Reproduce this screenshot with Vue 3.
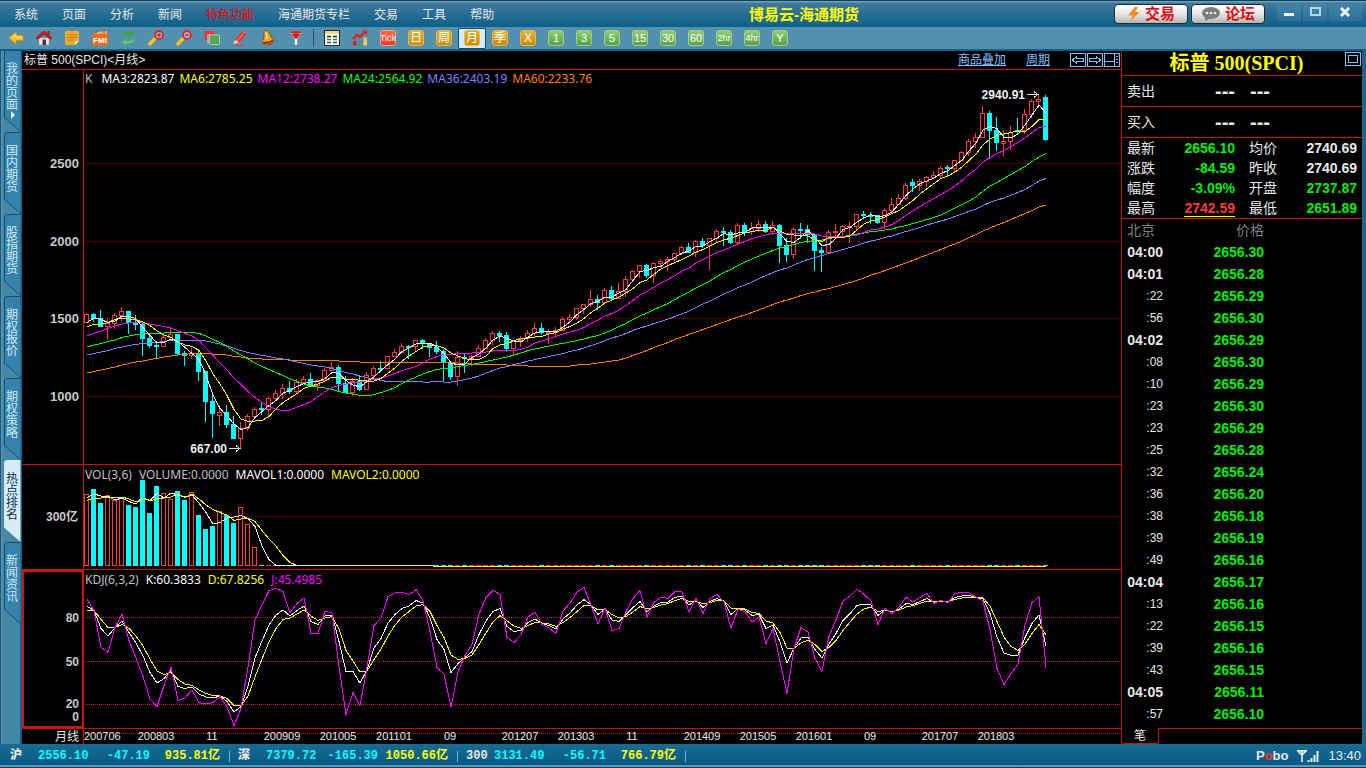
<script setup>
const menus = ['系统', '页面', '分析', '新闻', '特色功能', '海通期货专栏', '交易', '工具', '帮助']
const sideTabs = ['我的页面', '国内期货', '股指期货', '期权报价', '期权策略', '热点排名', '新闻资讯']
const periods = [
  { t: '日', c: 'gold' }, { t: '周', c: 'gold' }, { t: '月', c: 'gold', on: true }, { t: '季', c: 'gold' }, { t: 'X', c: 'gold' },
  { t: '1', c: 'green' }, { t: '3', c: 'green' }, { t: '5', c: 'green' }, { t: '15', c: 'green' }, { t: '30', c: 'green' },
  { t: '60', c: 'green' }, { t: '2hr', c: 'green small' }, { t: '4hr', c: 'green small' }, { t: 'Y', c: 'green' },
]

// Monthly closes before the first visible candle (2002-06 .. 2007-04)
const history = [
  989.82, 911.62, 916.07, 815.28, 885.76, 936.31, 879.82,
  855.7, 841.15, 848.18, 916.92, 963.59, 974.5, 990.31, 1008.01, 995.97, 1050.71, 1058.2, 1111.92,
  1131.13, 1144.94, 1126.21, 1107.3, 1120.68, 1140.84, 1101.72, 1104.24, 1114.58, 1130.2, 1173.82, 1211.92,
  1181.27, 1203.6, 1180.59, 1156.85, 1191.5, 1191.33, 1234.18, 1220.33, 1228.81, 1207.01, 1249.48, 1248.29,
  1280.08, 1280.66, 1294.87, 1310.61, 1270.09, 1270.2, 1276.66, 1303.82, 1335.85, 1377.94, 1400.63, 1418.3,
  1438.24, 1406.82, 1420.86, 1482.37,
]
const priorRange = [[1431.81, 1385.93], [1441.61, 1403.97], [1461.57, 1389.42], [1438.89, 1363.98], [1498.02, 1416.37]]

// [high, low, close, open?] from 2007-05
const months = [
  [1535.56, 1476.7, 1530.62], [1540.56, 1484.18, 1503.35], [1555.9, 1454.25, 1455.27], [1503.89, 1370.6, 1473.99],
  [1538.74, 1439.29, 1526.75], [1576.09, 1489.56, 1549.38], [1545.79, 1406.1, 1481.14], [1523.57, 1435.65, 1468.36],
  [1471.77, 1270.05, 1378.55], [1396.02, 1316.75, 1330.63], [1359.68, 1256.98, 1322.7], [1404.57, 1324.35, 1385.59],
  [1440.24, 1373.07, 1400.38], [1404.05, 1272, 1280], [1292.17, 1200.44, 1267.38], [1313.15, 1247.45, 1282.83],
  [1303.04, 1106.42, 1166.36], [1167.03, 839.8, 968.75], [1007.51, 741.02, 896.24], [918.85, 815.69, 903.25, 880],
  [943.85, 804.3, 825.88], [875.01, 734.52, 735.09], [832.98, 667, 797.87], [888.7, 783.32, 872.81],
  [930.17, 866.1, 919.14], [956.23, 888.86, 919.32, 923.26], [996.68, 869.32, 987.48], [1039.47, 978.51, 1020.62],
  [1080.15, 991.97, 1057.08], [1101.36, 1019.95, 1036.19], [1113.69, 1029.38, 1095.63], [1130.38, 1085.89, 1115.1],
  [1150.45, 1071.59, 1073.87], [1112.42, 1044.5, 1104.49], [1180.69, 1105.36, 1169.43], [1219.8, 1170.69, 1186.69],
  [1205.13, 1040.78, 1089.41], [1131.23, 1028.33, 1030.71], [1120.95, 1010.91, 1101.6], [1129.24, 1039.7, 1049.33],
  [1157.16, 1049.72, 1141.2], [1196.14, 1131.87, 1183.26], [1227.08, 1173, 1180.55], [1262.6, 1186.6, 1257.64],
  [1302.67, 1257.62, 1286.12], [1344.07, 1294.26, 1327.22], [1332.28, 1249.05, 1325.83], [1364.56, 1294.7, 1363.61],
  [1370.58, 1311.8, 1345.2], [1345.2, 1258.07, 1320.64], [1356.48, 1282.86, 1292.28], [1307.38, 1101.54, 1218.89],
  [1229.29, 1114.22, 1131.42], [1292.66, 1074.77, 1253.3], [1277.55, 1158.66, 1246.96], [1269.37, 1202.37, 1257.6],
  [1333.47, 1258.86, 1312.41], [1378.04, 1312.45, 1365.68], [1419.15, 1340.03, 1408.47], [1422.38, 1357.38, 1397.91],
  [1415.32, 1291.98, 1310.33], [1363.46, 1266.74, 1362.16], [1391.74, 1325.41, 1379.32], [1426.68, 1354.65, 1406.58],
  [1474.51, 1396.56, 1440.67], [1470.96, 1403.28, 1412.16], [1434.27, 1343.35, 1416.18], [1448, 1398.11, 1426.19],
  [1509.94, 1426.19, 1498.11], [1530.94, 1485.01, 1514.68], [1570.28, 1501.48, 1569.19], [1597.57, 1536.03, 1597.57],
  [1687.18, 1581.28, 1630.74], [1654.19, 1560.33, 1606.28], [1698.78, 1604.57, 1685.73], [1709.67, 1627.47, 1632.97],
  [1729.86, 1633.41, 1681.55], [1775.22, 1646.47, 1756.54], [1813.55, 1746.2, 1805.81], [1849.44, 1767.99, 1848.36],
  [1850.84, 1770.45, 1782.59], [1867.92, 1737.92, 1859.45], [1883.97, 1834.44, 1872.34], [1897.28, 1814.36, 1883.95],
  [1924.03, 1859.79, 1923.57], [1968.17, 1915.98, 1960.23], [1991.39, 1930.67, 1930.67], [2005.04, 1904.78, 2003.37],
  [2019.26, 1964.04, 1972.29], [2018.19, 1820.66, 2018.05], [2075.76, 2001.01, 2067.56], [2093.55, 1972.56, 2058.9],
  [2072.36, 1988.12, 1994.99], [2119.59, 1980.9, 2104.5], [2117.52, 2039.69, 2067.89], [2125.92, 2048.38, 2085.51],
  [2134.72, 2067.93, 2107.39], [2129.87, 2056.32, 2063.11], [2132.82, 2044.02, 2103.84], [2112.66, 1867.01, 1972.18],
  [2020.86, 1871.91, 1920.03], [2094.32, 1893.7, 2079.36], [2116.48, 2019.39, 2080.41, 2080.76], [2104.27, 1993.26, 2043.94],
  [2038.2, 1812.29, 1940.24], [1962.96, 1810.1, 1932.23], [2072.21, 1937.09, 2059.74], [2111.05, 2033.8, 2065.3],
  [2103.48, 2025.91, 2096.95], [2120.55, 1991.68, 2098.86], [2177.09, 2074.02, 2173.6], [2193.81, 2147.58, 2170.95],
  [2187.87, 2119.12, 2168.27], [2169.6, 2114.72, 2126.15], [2214.1, 2083.79, 2198.81], [2277.53, 2187.44, 2238.83],
  [2300.99, 2245.13, 2278.87], [2371.54, 2271.65, 2363.64], [2400.98, 2322.25, 2362.72, 2380.13], [2398.16, 2328.95, 2384.2],
  [2418.71, 2352.72, 2411.8], [2453.82, 2405.7, 2423.41], [2484.04, 2407.7, 2470.3], [2490.87, 2417.35, 2471.65, 2477.1],
  [2519.44, 2446.55, 2519.36], [2582.98, 2520.4, 2575.26], [2657.74, 2557.45, 2647.58], [2694.97, 2605.52, 2673.61],
  [2872.87, 2682.36, 2823.81], [2835.96, 2532.69, 2713.83], [2801.9, 2585.89, 2640.87], [2717.49, 2553.8, 2648.05, 2633.45],
  [2742.24, 2594.62, 2705.27], [2791.47, 2691.99, 2718.37, 2718.7], [2848.03, 2698.95, 2816.29], [2916.5, 2796.34, 2901.52],
  [2940.91, 2864.12, 2913.98], [2939.86, 2651.89, 2656.1, 2926.29],
]

const STEP = 7
const FIRST = 64
const barX = (i) => FIRST + i * STEP
const priceY = (v) => 93.5 + (2500 - v) * 0.15533
const kdjY = (v) => 47.5 + (80 - v) * 1.453
const path = (values, y) => values.map((v, i) => `${barX(i) + 1},${Math.round(y(v, i) * 2) / 2}`).join(' ')

const closes = [...history, ...months.map((m) => m[2])]
const average = (list, n, count) => {
  const start = list.length - count
  return Array.from({ length: count }, (_, i) => {
    const end = start + i + 1
    const part = list.slice(Math.max(0, end - n), end)
    return part.reduce((a, b) => a + b, 0) / part.length
  })
}

const candles = months.map((m, i) => {
  const open = m[3] ?? closes[history.length + i - 1]
  const up = m[2] >= open
  const top = Math.round(priceY(Math.max(open, m[2])))
  const bottom = Math.round(priceY(Math.min(open, m[2])))
  return { x: barX(i), up, top, h: Math.max(bottom - top, 1), hi: Math.round(priceY(m[0])), lo: Math.round(priceY(m[1])) + 1 }
})
const maLines = [
  { n: 60, c: '#ff8000' }, { n: 36, c: '#8080ff' }, { n: 24, c: '#00ff00' },
  { n: 12, c: '#ff00ff' }, { n: 6, c: '#ffff00' }, { n: 3, c: '#f0f0f0' },
].map((l) => ({ ...l, pts: path(average(closes, l.n, months.length), priceY) }))

const maLegend = [
  ['MA3:2823.87', '#ffffff'], ['MA6:2785.25', '#ffff00'], ['MA12:2738.27', '#ff00ff'],
  ['MA24:2564.92', '#00ff00'], ['MA36:2403.19', '#8080ff'], ['MA60:2233.76', '#ff8000'],
]

// Volume, in bar pixels above the baseline
const rawVol = [71, 76, 62, 70, 65, 67, 60, 58, 85, 52, 79, 72, 66, 74, 65, 73, 50, 36, 39, 54, 50, 42, 58, 41, 18]
const volUp = [1, 0, 0, 1, 1, 1, 0, 0, 0, 0, 0, 1, 1, 0, 0, 1, 0, 0, 0, 1, 0, 0, 1, 1, 1]
const volume = months.map((_, i) => rawVol[i] ?? 0)
const VOL_BASE = 101
const volBars = volume.map((v, i) => ({ x: barX(i), h: v, up: i < volUp.length ? !!volUp[i] : candles[i].up }))
const volY = (v, i) => (i < 50 ? VOL_BASE - 0.5 : VOL_BASE + 0.5) - v
const volHistory = [60, 62, 64, 66, 67, ...volume]
const mavol1 = path(average(volHistory, 3, months.length), volY)
const mavol2 = path(average(volHistory, 6, months.length), volY)

// KDJ(6,3,2)
const ranges = [...priorRange, ...months.map((m) => [m[0], m[1]])]
const kLine = []
const dLine = []
months.forEach((m, i) => {
  if (i === 0) {
    kLine.push(87.6)
    dLine.push(85)
    return
  }
  const win = ranges.slice(i, i + 6)
  const hi = Math.max(...win.map((r) => r[0]))
  const lo = Math.min(...win.map((r) => r[1]))
  const rsv = ((m[2] - lo) / (hi - lo)) * 100
  const k = (kLine[i - 1] * 2 + rsv) / 3
  kLine.push(k)
  dLine.push((dLine[i - 1] + k) / 2)
})
const jLine = kLine.map((k, i) => 3 * k - 2 * dLine[i])
const kdjLines = [
  { pts: path(kLine, kdjY), c: '#f0f0f0' },
  { pts: path(dLine, kdjY), c: '#ffff00' },
  { pts: path(jLine, kdjY), c: '#ff00ff' },
]

const dates = [
  [10, '200803'], [18, '11'], [28, '200909'], [36, '201005'], [44, '201101'], [52, '09'], [62, '201207'], [70, '201303'],
  [78, '11'], [88, '201409'], [96, '201505'], [104, '201601'], [112, '09'], [122, '201707'], [130, '201803'],
]

const quotes = [
  ['最新', '2656.10', 'dn', '均价', '2740.69', 'eq'],
  ['涨跌', '-84.59', 'dn', '昨收', '2740.69', 'eq'],
  ['幅度', '-3.09%', 'dn', '开盘', '2737.87', 'dn'],
  ['最高', '2742.59', 'up', '最低', '2651.89', 'dn'],
]
const ticks = [
  ['04:00', '2656.30'], ['04:01', '2656.28'], [':22', '2656.29'], [':56', '2656.30'], ['04:02', '2656.29'], [':08', '2656.30'],
  [':10', '2656.29'], [':23', '2656.30'], [':23', '2656.29'], [':25', '2656.28'], [':32', '2656.24'], [':36', '2656.20'],
  [':38', '2656.18'], [':39', '2656.19'], [':49', '2656.16'], ['04:04', '2656.17'], [':13', '2656.16'], [':22', '2656.15'],
  [':39', '2656.16'], [':43', '2656.15'], ['04:05', '2656.11'], [':57', '2656.10'],
]
const indices = [
  ['沪', '2556.10', '-47.19', '935.81亿'],
  ['深', '7379.72', '-165.39', '1050.66亿'],
  ['300', '3131.49', '-56.71', '766.79亿'],
]
</script>

<template>
  <div class="app">
    <header class="menubar">
      <nav class="menus">
        <button v-for="m in menus" :key="m" type="button" :class="{ hot: m === '特色功能' }">{{ m }}</button>
      </nav>
      <h1>博易云-海通期货</h1>
      <div class="topright">
        <button type="button" class="pill">
          <svg width="14" height="16" viewBox="0 0 14 16"><path d="M8 1 1 9.500h4.600L3.600 15 12.600 6H8.200L11 1z" fill="#f58a1e" /></svg>
          交易
        </button>
        <button type="button" class="pill">
          <svg width="20" height="16" viewBox="0 0 20 16"><ellipse cx="10" cy="7" rx="9" ry="6" fill="#7c7c7c" /><path d="M4 10v5l6-3z" fill="#7c7c7c" /><circle cx="6" cy="7" r="1.300" fill="#eee" /><circle cx="10" cy="7" r="1.300" fill="#eee" /><circle cx="14" cy="7" r="1.300" fill="#eee" /></svg>
          论坛
        </button>
        <div class="winbtns">
          <button type="button" aria-label="最小化"><svg width="12" height="12"><path d="M1 7.500h10" stroke="#e8f2f8" stroke-width="3" /></svg></button>
          <button type="button" aria-label="最大化"><svg width="12" height="12"><rect x="2" y="1" width="9" height="7" fill="none" stroke="#b4d8ea" stroke-width="2" /></svg></button>
          <button type="button" aria-label="关闭" class="close"><svg width="12" height="12"><path d="M2 1l8 8M10 1l-8 8" stroke="#e8f2f8" stroke-width="3" /></svg></button>
        </div>
      </div>
    </header>

    <div class="toolbar">
      <button type="button" aria-label="后退"><svg viewBox="0 0 16 16"><path d="M1 8 8 2v3.500h7v5H8V14z" fill="#ffc52e" stroke="#e08a00" /><path d="M4 7.500 8 4.500V7h6" fill="none" stroke="#fff0a0" /></svg></button>
      <button type="button" aria-label="首页"><svg viewBox="0 0 16 16"><path d="M3 8h10v7H3z" fill="#e9e9e9" stroke="#999" stroke-width=".5" /><path d="M0 8 8 1l8 7-2 1-6-5-6 5z" fill="#d8141c" stroke="#b81018" /><path d="M11.500 1h2v4l-2-2z" fill="#a01010" /><path d="M6.500 9.500h3.500V15H6.500z" fill="#503030" /></svg></button>
      <button type="button" aria-label="公告"><svg viewBox="0 0 16 16"><path d="M1 2q0-1 1-1h12q1 0 1 1v9l-4 4H2q-1 0-1-1z" fill="#f2a72e" /><path d="M15 11h-4v4z" fill="#ffe1a0" /><path d="M3.500 5h9M3.500 7.500h9M3.500 10h6" stroke="#c07a10" /></svg></button>
      <button type="button" aria-label="FMI"><svg viewBox="0 0 16 16"><path d="M0 4h16v11.500H0z" fill="#f26a1c" /><path d="M1 4l5-2 9-1v3z" fill="#f7b060" /><path d="M4 0v4M12 0v4" stroke="#a85010" /><text x="8" y="13" font-size="8" font-weight="bold" text-anchor="middle" fill="#fff">FMI</text></svg></button>
      <button type="button" aria-label="刷新"><svg viewBox="0 0 16 16"><path d="M2.500 6.500Q4 3.500 8 3.500h3" fill="none" stroke="#2fae2f" stroke-width="2.500" /><path d="M10 1l4.500 3L10 7z" fill="#2fae2f" /><path d="M13.500 9.500Q12 12.500 8 12.500H5" fill="none" stroke="#5ad048" stroke-width="2.500" /><path d="M6 9.500 1.500 12.500 6 15.500z" fill="#5ad048" /></svg></button>
      <button type="button" aria-label="放大"><svg viewBox="0 0 16 16"><path d="M2 14 6.500 9" stroke="#ffc21e" stroke-width="3.500" stroke-linecap="round" /><circle cx="11" cy="5" r="4" fill="#9cb4c4" stroke="#e0242c" stroke-width="1.800" /><path d="M9 5h4M11 3v4" stroke="#e0242c" stroke-width="1.500" /></svg></button>
      <button type="button" aria-label="缩小"><svg viewBox="0 0 16 16"><path d="M2 14 6.500 9" stroke="#ffc21e" stroke-width="3.500" stroke-linecap="round" /><circle cx="11" cy="5" r="4" fill="#9cb4c4" stroke="#e0242c" stroke-width="1.800" /><path d="M9 5h4" stroke="#e0242c" stroke-width="1.500" /></svg></button>
      <button type="button" aria-label="叠加"><svg viewBox="0 0 16 16"><rect x="0.500" y="1" width="10" height="9" rx="1" fill="#e8343c" /><rect x="3" y="4" width="4" height="9" fill="#b8cfdc" opacity=".6" /><rect x="5.500" y="5" width="10" height="9.500" rx="1" fill="#58a454" stroke="#a8d4a4" /></svg></button>
      <button type="button" aria-label="画线"><svg viewBox="0 0 16 16"><path d="M3 10 10.500 1l4 3L7 12.500z" fill="#ee2e24" /><path d="M5 11l7.500-9" stroke="#ff9a90" /><path d="M3 10l4 2.500L1.500 14z" fill="#ffd9a0" /><path d="M1 15.500h13" stroke="#e0403a" /></svg></button>
      <button type="button" aria-label="预警"><svg viewBox="0 0 16 16"><path d="M4 1q4-2 6 4 1 4 5 5-2 4-8 5-4 0-6-3 3-1 3-6z" fill="#f0a822" stroke="#96520c" /><path d="M5 3q2 0 2 6" fill="none" stroke="#fff0a0" stroke-width="1.500" /><path d="M3 12.500q6 1 10-2" fill="none" stroke="#7a2c08" stroke-width="2" /><circle cx="10" cy="13.500" r="1.800" fill="#d83020" /></svg></button>
      <button type="button" aria-label="过滤"><svg viewBox="0 0 16 16"><path d="M1.500 2h13L9.500 9v6h-3V9z" fill="#eef3f6" stroke="#8799a5" stroke-width=".7" /><path d="M3 4h10L8.500 9h-1z" fill="#e02028" /><ellipse cx="8" cy="2.500" rx="6" ry="1.500" fill="#c03030" /></svg></button>
      <span class="sep"></span>
      <button type="button" aria-label="报价"><svg viewBox="0 0 16 16"><rect x=".5" y=".5" width="15" height="15" fill="#fffef0" stroke="#223" /><path d="M1 2.500h14" stroke="#f0d890" stroke-width="3" /><path d="M3 6.500h4M9 6.500h4" stroke="#222" stroke-width="1.500" /><path d="M3 9.500h4M9 9.500h4" stroke="#2a8a2a" stroke-width="1.500" /><path d="M3 12.500h4M9 12.500h4" stroke="#2040a0" stroke-width="1.500" /></svg></button>
      <button type="button" aria-label="走势"><svg viewBox="0 0 16 16"><path d="M1 9l4-4 3 2 5-5" fill="none" stroke="#ee1c1c" stroke-width="2.200" /><path d="M10 .5h5v5z" fill="#ee1c1c" /><path d="M1 11h3.500v4.500H1z" fill="#d02020" /><path d="M6 12.500h3.500v3H6z" fill="#40a050" /><path d="M11.500 7.500h3.500v8h-3.500z" fill="#f6c860" /></svg></button>
      <button type="button"><span class="tile tick">Tick</span></button>
      <button v-for="p in periods" :key="p.t" type="button" :class="{ on: p.on }"><span class="tile" :class="p.c">{{ p.t }}</span></button>
    </div>

    <div class="body">
      <nav class="side">
        <button v-for="(t, i) in sideTabs" :key="t" type="button" :class="{ active: i === 5 }">
          <svg viewBox="0 0 17 82" preserveAspectRatio="none"><path d="M16.500 .5H3Q.5 .5 .5 3V67.500L16.500 81.500" /></svg>
          <span>{{ t }}</span><i v-if="i === 0"></i>
        </button>
      </nav>

      <main class="charts">
        <div class="titlerow">
          <h2>标普 500(SPCI)&lt;月线&gt;</h2>
          <a href="#overlay">商品叠加</a>
          <a href="#period">周期</a>
          <div class="navicons">
            <button type="button" aria-label="左移"><svg width="16" height="14"><rect x=".5" y=".5" width="15" height="13" /><path d="M2.500 7 6.500 3.500V5.500h7v3h-7v2z" /></svg></button>
            <button type="button" aria-label="右移"><svg width="16" height="14"><rect x=".5" y=".5" width="15" height="13" /><path d="M13.500 7 9.500 3.500V5.500h-7v3h7v2z" /></svg></button>
            <button type="button" aria-label="布局"><svg width="16" height="14"><rect x=".5" y=".5" width="15" height="13" /><path d="M.5 8.500h10M10.500 .5v13M12 3.500h2M12 6.500h2M12 9.500h2" /></svg></button>
          </div>
        </div>

        <section class="pane price">
          <svg class="plot">
            <g class="grid">
              <line v-for="v in [2500, 2000, 1500, 1000]" :key="v" x1="63" x2="100%" :y1="Math.floor(priceY(v)) + 0.5" :y2="Math.floor(priceY(v)) + 0.5" />
            </g>
            <line class="frame" x1="61.500" x2="61.500" y1="0" y2="100%" />
            <g class="ylab">
              <text v-for="v in [2500, 2000, 1500, 1000]" :key="v" x="57" :y="Math.floor(priceY(v)) + 5">{{ v }}</text>
            </g>
            <g v-for="c in candles" :key="c.x" :class="c.up ? 'cu' : 'cd'">
              <template v-if="c.up">
                <line :x1="c.x + 0.5" :x2="c.x + 0.5" :y1="c.hi" :y2="c.top" />
                <line :x1="c.x + 0.5" :x2="c.x + 0.5" :y1="c.top + c.h" :y2="c.lo" />
                <rect :x="c.x - 1.5" :y="c.top + 0.5" width="4" :height="c.h" />
              </template>
              <template v-else>
                <line :x1="c.x + 0.5" :x2="c.x + 0.5" :y1="c.hi" :y2="c.lo" />
                <rect :x="c.x - 2" :y="c.top" width="5" :height="c.h + 1" />
              </template>
            </g>
            <polyline v-for="l in maLines" :key="l.n" :points="l.pts" :stroke="l.c" />
            <g class="mark">
              <text x="205" y="383">667.00</text>
              <path d="M207 378.500h11M214 375.500l4 3-4 3" />
              <text x="1003" y="29">2940.91</text>
              <path d="M1005 24.500h11M1012 21.500l4 3-4 3" />
            </g>
          </svg>
          <div class="legend">
            <span class="name">K</span>
            <span v-for="l in maLegend" :key="l[0]" :style="{ color: l[1] }">{{ l[0] }}</span>
          </div>
        </section>

        <section class="pane vol">
          <svg class="plot">
            <g class="grid"><line x1="63" x2="100%" y1="51.500" y2="51.500" /></g>
            <line class="frame" x1="61.500" x2="61.500" y1="0" y2="100%" />
            <g class="ylab"><text x="56" y="56">300亿</text></g>
            <g v-for="b in volBars" :key="b.x" :class="b.up ? 'cu' : 'cd'">
              <rect v-if="b.up && b.h" :x="b.x - 1.5" :y="VOL_BASE - b.h - 0.5" width="4" :height="b.h" />
              <rect v-else-if="b.h" :x="b.x - 2" :y="VOL_BASE - b.h - 1" width="5" :height="b.h + 1" />
              <line v-else :x1="b.x - 2" :x2="b.x + 3" :y1="VOL_BASE - 0.5" :y2="VOL_BASE - 0.5" />
            </g>
            <polyline :points="mavol1" stroke="#f0f0f0" />
            <polyline :points="mavol2" stroke="#ffff00" />
          </svg>
          <div class="legend">
            <span>VOL(3,6)</span><span>VOLUME:0.0000</span><span class="w">MAVOL1:0.0000</span><span class="y">MAVOL2:0.0000</span>
          </div>
        </section>

        <section class="pane kdj">
          <svg class="plot">
            <g class="grid bright">
              <line v-for="v in [80, 50, 20]" :key="v" x1="63" x2="100%" :y1="Math.floor(kdjY(v)) + 0.5" :y2="Math.floor(kdjY(v)) + 0.5" />
            </g>
            <rect class="focus" x="1" y="1" width="60" height="156" />
            <g class="ylab">
              <text x="57" y="52">80</text><text x="57" y="96">50</text><text x="57" y="138">20</text><text x="57" y="151">0</text>
            </g>
            <polyline v-for="l in kdjLines" :key="l.c" :points="l.pts" :stroke="l.c" />
          </svg>
          <div class="legend">
            <span>KDJ(6,3,2)</span><span class="w">K:60.3833</span><span class="y">D:67.8256</span><span class="m">J:45.4985</span>
          </div>
        </section>

        <section class="xaxis">
          <svg class="plot">
            <g class="grid bright"><line x1="63" x2="100%" y1="4.500" y2="4.500" /></g>
            <line class="frame" x1="61.500" x2="61.500" y1="0" y2="100%" />
            <text x="57" y="12" class="unit">月线</text>
            <text x="62" y="11" class="first">200706</text>
            <text v-for="d in dates" :key="d[0]" :x="barX(d[0])" y="11">{{ d[1] }}</text>
          </svg>
        </section>
      </main>

      <aside class="quote">
        <div class="qhead">
          <h2>标普 500(SPCI)</h2>
          <button type="button" aria-label="展开"><svg width="16" height="14"><rect x=".5" y=".5" width="15" height="13" /><rect x="3.500" y="3.500" width="9" height="7" /></svg></button>
        </div>
        <div v-for="s in ['卖出', '买入']" :key="s" class="side-row"><span>{{ s }}</span><i>---</i><i>---</i></div>
        <table class="stats">
          <tbody>
            <tr v-for="q in quotes" :key="q[0]">
              <th scope="row">{{ q[0] }}</th><td :class="q[2]"><span>{{ q[1] }}</span></td>
              <th scope="row" class="second">{{ q[3] }}</th><td :class="q[5]">{{ q[4] }}</td>
            </tr>
          </tbody>
        </table>
        <table class="ticks">
          <thead><tr><th scope="col" class="time">北京</th><th scope="col">价格</th><th></th></tr></thead>
          <tbody>
            <tr v-for="(t, i) in ticks" :key="i">
              <td class="time" :class="{ minute: t[0].length > 3 }">{{ t[0] }}</td><td class="dn">{{ t[1] }}</td><td></td>
            </tr>
          </tbody>
        </table>
        <div class="tabrow"><button type="button">笔</button><span></span></div>
      </aside>
    </div>

    <footer class="status">
      <div v-for="x in indices" :key="x[0]" class="index">
        <b>{{ x[0] }}</b><span>{{ x[1] }}</span><span>{{ x[2] }}</span><em>{{ x[3] }}</em><i></i>
      </div>
      <div class="right">
        <strong>P<u>o</u>bo</strong>
        <svg width="22" height="13"><path d="M0 .8h10M1 1l4 4 4-4M5 1v11" fill="none" stroke="#e8f2f8" stroke-width="1.600" /><path d="M11.500 12v-2M14.500 12V8M17.500 12V5M20.500 12V1" stroke="#e8f2f8" stroke-width="2" /></svg>
        <time>13:40</time>
      </div>
    </footer>
  </div>
</template>

<style>
html,
body {
  margin: 0;
  background: #000;
}
</style>

<style scoped>
.app {
  min-height: 100vh;
  display: flex;
  flex-direction: column;
  background: #1a658c;
  font: 12px/14px "Liberation Sans", "Noto Sans CJK SC", sans-serif;
  color: #e8e8e8;
}
button {
  margin: 0;
  padding: 0;
  border: 0;
  background: none;
  font: inherit;
  color: inherit;
}
svg {
  display: block;
}
h1,
h2 {
  margin: 0;
}
.menubar {
  box-sizing: border-box;
  height: 27px;
  border-top: 1px solid #123f58;
  display: flex;
  align-items: center;
  justify-content: space-between;
  padding: 0 4px 0 14px;
  background: linear-gradient(#6ba0bb 0, #6ba0bb 1px, #42799b 2px, #0d6089 100%);
}
.menus {
  display: flex;
  gap: 24px;
  padding-top: 2px;
}
.menus .hot {
  color: #ff0000;
}
.menubar h1 {
  font-size: 15px;
  line-height: 18px;
  padding-top: 2px;
  color: #ffff00;
}
.topright {
  display: flex;
  align-items: center;
  gap: 3px;
}
.pill {
  box-sizing: border-box;
  width: 74px;
  height: 20px;
  border: 1px solid #1c2a33;
  border-radius: 4px;
  background: linear-gradient(#ffffff, #e6e6e6 50%, #b4b4b4);
  display: flex;
  align-items: center;
  justify-content: center;
  gap: 4px;
  font-size: 15px;
  font-weight: bold;
  color: #dd1018;
}
.winbtns {
  display: flex;
  gap: 2px;
  align-self: flex-start;
  padding-left: 9px;
}
.winbtns button {
  width: 24px;
  height: 17px;
  display: flex;
  align-items: center;
  justify-content: center;
  background: linear-gradient(#4583a5, #2c7298);
}
.winbtns .close {
  width: 33px;
}
.toolbar {
  box-sizing: border-box;
  height: 24px;
  border-bottom: 2px solid #155f87;
  background: #5390ad;
  display: flex;
  align-items: center;
  padding-left: 2px;
}
.toolbar button {
  box-sizing: border-box;
  width: 28px;
  height: 21px;
  display: flex;
  align-items: center;
  justify-content: center;
}
.toolbar svg {
  width: 16px;
  height: 16px;
}
.toolbar .sep {
  box-sizing: border-box;
  width: 4px;
  height: 18px;
  margin-right: 4px;
  border-right: 1px solid #1f4f80;
}
.toolbar .on {
  border: 1px solid #0f4a70;
  border-radius: 2px;
  background: #d5ebf8;
}
.tile {
  box-sizing: border-box;
  width: 16px;
  height: 16px;
  border: 1px solid;
  border-radius: 3px;
  font: 12px/14px "Liberation Sans", "Noto Sans CJK SC", sans-serif;
  text-align: center;
  color: #fff;
  display: flex;
  justify-content: center;
}
.tile.gold {
  background: linear-gradient(#e0b040, #cc8a00);
  border-color: #e8b848;
}
.tile.green {
  background: linear-gradient(#90cc78, #5aa048);
  border-color: #9fd088;
  font-size: 11px;
}
.tile.small {
  font-size: 9px;
}
.tile.tick {
  background: linear-gradient(#f86a48, #e83c20);
  border-color: #f8a088;
  font-size: 9px;
}
.body {
  flex: 1;
  display: grid;
  grid-template-columns: 22px 1fr 241px;
  padding-right: 4px;
}
.side {
  padding-left: 4px;
  background: linear-gradient(90deg, #24546e 0, #24546e 1px, #5b9ab8 1px, #4587a6 3px, #4587a6 20px, #155f87 20px);
}
.side button {
  position: relative;
  display: block;
  width: 17px;
  height: 82px;
  color: #d0ecff;
}
.side svg {
  position: absolute;
  left: 0;
  top: -1px;
  width: 17px;
  height: 82px;
}
.side path {
  fill: #3682aa;
  stroke: #125074;
}
.side span {
  position: relative;
  display: block;
  width: 12px;
  margin-left: 2px;
  height: 58px;
  line-height: 12px;
  word-break: break-all;
}
.side i {
  position: absolute;
  left: 7px;
  top: 60px;
  border: 4px solid transparent;
  border-left-color: #e0f4ff;
  border-right-width: 0;
}
.side .active {
  color: #0c3048;
}
.side .active path {
  fill: #d8ecf8;
  stroke: #d8ecf8;
}
.charts {
  min-width: 0;
  background: #000;
  display: flex;
  flex-direction: column;
}
.titlerow {
  height: 18px;
  border-bottom: 1px solid #c01808;
  display: flex;
  align-items: center;
  padding: 0 1px 0 2px;
}
.titlerow h2 {
  flex: 1;
  font-size: 12px;
  line-height: 18px;
  font-weight: normal;
}
.titlerow a {
  color: #80c0ff;
  margin-right: 20px;
}
.navicons {
  display: flex;
  gap: 1px;
}
.navicons svg,
.qhead svg {
  fill: none;
  stroke: #80c0ff;
  shape-rendering: crispEdges;
}
.pane {
  position: relative;
  border-bottom: 1px solid #c01808;
}
.price {
  flex: 1;
  min-height: 394px;
}
.vol {
  height: 104px;
}
.kdj {
  height: 158px;
}
.xaxis {
  height: 15px;
}
.plot {
  width: 100%;
  height: 100%;
  shape-rendering: crispEdges;
}
.price .plot {
  position: absolute;
  inset: 0;
}
.grid line {
  stroke: #900000;
  stroke-dasharray: 1 1;
}
.grid.bright line {
  stroke: #c81818;
}
.frame {
  stroke: #d01808;
}
.focus {
  fill: none;
  stroke: #d01408;
  stroke-width: 2;
}
.ylab text {
  fill: #c8c8c8;
  font-size: 13px;
  font-weight: bold;
  text-anchor: end;
}
.vol .ylab text,
.kdj .ylab text {
  font-size: 12px;
}
.cu line,
.cu rect {
  fill: none;
  stroke: #ff3c3c;
}
.cu rect {
  fill: #000;
}
.cd line {
  stroke: #00ffff;
}
.cd rect {
  fill: #00ffff;
}
polyline {
  fill: none;
}
.mark text {
  fill: #f0f0f0;
  font-weight: bold;
  text-anchor: end;
}
.mark path {
  fill: none;
  stroke: #e0e0e0;
}
.legend {
  position: absolute;
  left: 63px;
  top: 2px;
  display: flex;
  gap: 5px;
  font-family: "Noto Sans", sans-serif;
  color: #c0c0c0;
}
.vol .legend,
.kdj .legend {
  top: 3px;
  gap: 7px;
}
.legend .name {
  margin-right: 4px;
}
.legend .w {
  color: #fff;
}
.legend .y {
  color: #ff0;
}
.legend .m {
  color: #f0f;
}
.xaxis text {
  fill: #e8e8e8;
  font-size: 11px;
  text-anchor: middle;
}
.xaxis .unit {
  font-size: 12px;
  text-anchor: end;
}
.xaxis .first {
  text-anchor: start;
}
.quote {
  background: #000;
  border-left: 1px solid #c01808;
  display: flex;
  flex-direction: column;
}
.qhead {
  height: 24px;
  border-bottom: 1px solid #c01808;
  display: flex;
  padding-right: 1px;
  align-items: flex-start;
}
.qhead button {
  padding-top: 1px;
}
.qhead h2 {
  flex: 1;
  padding-left: 6px;
  text-align: center;
  font: bold 20px/24px "Liberation Serif", "Noto Sans CJK SC", serif;
  color: #ffff00;
}
.side-row {
  height: 30px;
  border-bottom: 1px solid #c01808;
  display: flex;
  align-items: center;
  gap: 14px;
  padding-left: 5px;
  font-size: 14px;
}
.side-row span {
  width: 74px;
}
.side-row i {
  width: 21px;
  font: bold 20px/24px "Liberation Sans", sans-serif;
}
table {
  width: 100%;
  border-collapse: collapse;
  table-layout: fixed;
  font-size: 14px;
}
th,
td {
  padding: 0;
  text-align: right;
}
th {
  font-weight: normal;
}
td {
  font-weight: bold;
}
.stats {
  border-bottom: 1px solid #c01808;
}
.stats tr {
  height: 20px;
}
.stats th {
  text-align: left;
  width: 40px;
  padding-left: 5px;
}
.stats .second {
  padding-left: 14px;
}
.stats td:last-child {
  width: 68px;
  padding-right: 5px;
}
.dn {
  color: #00ee00;
}
.up {
  color: #ff3c3c;
}
.up span {
  border-bottom: 1px solid #ffff00;
}
.ticks tr {
  height: 22px;
}
.ticks th {
  color: #808080;
}
.ticks th,
.ticks td {
  width: 101px;
}
.ticks .time {
  width: 41px;
  font-size: 12px;
  font-weight: normal;
}
.ticks th.time {
  font-size: 14px;
  text-align: left;
  padding-left: 5px;
  width: 36px;
}
.ticks th:last-child {
  width: auto;
}
.ticks td.minute {
  font-size: 14px;
  font-weight: bold;
}
.tabrow {
  margin-top: auto;
  display: flex;
  height: 16px;
}
.tabrow button {
  box-sizing: border-box;
  width: 37px;
  border: 1px solid #c01808;
  border-width: 0 1px 1px 0;
  border-radius: 0 0 2px 2px;
}
.tabrow span {
  flex: 1;
  border-top: 1px solid #c01808;
}
.status {
  box-sizing: border-box;
  height: 24px;
  display: flex;
  align-items: center;
  padding: 0 5px 0 10px;
  background: linear-gradient(#1a6b92, #085a84 88%, #5a9ab8 88%, #5a9ab8 94%, #123f58 94%);
  font: bold 12px/16px "Liberation Mono", "Noto Sans CJK SC", monospace;
}
.index {
  display: grid;
  grid-template-columns: 28px 50px 62px 70px 18px;
  align-items: center;
  text-align: right;
  color: #00ffff;
}
.index b {
  color: #e8e8e8;
  text-align: left;
}
.index em {
  font-style: normal;
  color: #ffff00;
}
.index i {
  justify-self: center;
  width: 1px;
  height: 11px;
  background: #6ab4dc;
}
.right {
  margin-left: auto;
  display: flex;
  align-items: center;
  gap: 9px;
  font-family: "Liberation Sans", sans-serif;
}
.right strong {
  font-size: 13px;
}
.right u {
  text-decoration: none;
  color: #ff3020;
}
.right time {
  font-size: 13px;
  font-weight: normal;
}
</style>
